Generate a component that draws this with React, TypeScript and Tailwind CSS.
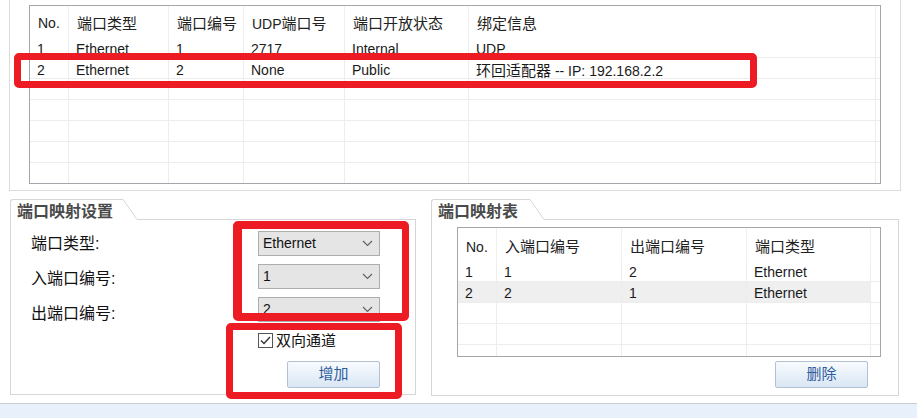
import { Fragment, ReactNode } from 'react';

const TOP_HEAD = ['No.', '端口类型', '端口编号', 'UDP端口号', '端口开放状态', '绑定信息'];
const TOP_ROWS = [
  ['1', 'Ethernet', '1', '2717', 'Internal', 'UDP'],
  ['2', 'Ethernet', '2', 'None', 'Public', '环回适配器 -- IP: 192.168.2.2'],
  ['', '', '', '', '', ''],
  ['', '', '', '', '', ''],
  ['', '', '', '', '', ''],
  ['', '', '', '', '', ''],
  ['', '', '', '', '', ''],
];

const MAP_HEAD = ['No.', '入端口编号', '出端口编号', '端口类型'];
const MAP_ROWS = [
  ['1', '1', '2', 'Ethernet'],
  ['2', '2', '1', 'Ethernet'],
  ['', '', '', ''],
  ['', '', '', ''],
  ['', '', '', ''],
];

// Chinese glyphs render a touch larger than the latin ones in the original
function Mixed({ text }: { text: string }) {
  const parts = text.split(/([\u4e00-\u9fff]+)/);
  return (
    <>
      {parts.map((p, i) =>
        /[\u4e00-\u9fff]/.test(p) ? (
          <span key={i} className="text-[15px]">
            {p}
          </span>
        ) : (
          <Fragment key={i}>{p}</Fragment>
        ),
      )}
    </>
  );
}

function Chevron() {
  return (
    <svg width="11" height="7" viewBox="0 0 11 7" className="shrink-0">
      <polyline points="1,1 5.5,5.5 10,1" fill="none" stroke="#606060" strokeWidth="1.1" />
    </svg>
  );
}

function Combo({ value }: { value: string }) {
  return (
    <div className="flex h-[25px] w-[122px] items-center justify-between border border-[#adadad] bg-[#e5e5e5] pl-[4px] pr-[6px] text-[14px] leading-[23px] text-[#111]">
      <span>{value}</span>
      <Chevron />
    </div>
  );
}

function WinButton({ label }: { label: string }) {
  return (
    <div className="flex h-[27px] w-[93px] items-center justify-center rounded-[2px] border border-[#b3c1d3] bg-gradient-to-b from-[#f8fbfe] to-[#d9e6f4] text-[15px] text-[#2d5c9c]">
      {label}
    </div>
  );
}

function GroupBox({ title, tab, className, children }: { title: string; tab: string; className: string; children: ReactNode }) {
  return (
    <div className={`flex flex-col ${className}`}>
      <div className="flex h-[21px] shrink-0">
        <div className={`${tab} rounded-tl-[3px] border-l border-t border-[#d6d6d6] pl-[6px] pt-[2px] text-[16px] font-bold leading-[20px] text-[#4a4a4a]`}>
          {title}
        </div>
        <svg width="14" height="21" viewBox="0 0 14 21" className="shrink-0">
          <line x1="0" y1="0.5" x2="14" y2="20.5" stroke="#d6d6d6" strokeWidth="1" />
        </svg>
        <div className="flex-1 border-b border-[#d6d6d6]" />
      </div>
      <div className="flex-1 border-x border-b border-[#d6d6d6]">{children}</div>
    </div>
  );
}

export default function App() {
  return (
    <div className="relative h-[418px] w-[917px] overflow-hidden bg-white font-['Liberation_Sans','Noto_Sans_CJK_SC',sans-serif] text-[#1a1a1a]">
      {/* 端口列表 */}
      <div className="ml-[9px] h-[191px] w-[892px] border-x border-b border-[#dcdcdc] pl-[19px] pt-[5px]">
        <div className="h-[179px] w-[852px] overflow-hidden border border-[#a3a6aa] bg-white">
          <div className="grid grid-cols-[39px_100px_75px_101px_124px_407px_1fr] text-[14px]">
            {TOP_HEAD.map((h) => (
              <div key={h} className="h-[31px] border-r border-[#f0f0f0] pl-[8px] pt-[2px] leading-[31px] text-[#222]">
                <Mixed text={h} />
              </div>
            ))}
            <div className="h-[31px]" />
            {TOP_ROWS.map((r, i) => (
              <Fragment key={i}>
                {r.map((c, j) => (
                  <div key={j} className="h-[21px] overflow-hidden whitespace-nowrap border-b border-r border-[#ededed] pl-[7px] pt-[2px] leading-[21px]">
                    <Mixed text={c} />
                  </div>
                ))}
                <div className="h-[21px] border-b border-[#ededed]" />
              </Fragment>
            ))}
          </div>
        </div>
      </div>

      {/* 端口映射 */}
      <div className="flex h-[212px] pl-[10px] pt-[8px]">
        <GroupBox title="端口映射设置" tab="w-[113px]" className="h-[196px] w-[406px]">
          <div className="flex">
            <div className="flex w-[247px] flex-col gap-[15px] pl-[20px] pt-[14px] text-[16px] leading-[20px] text-[#111]">
              <span>端口类型:</span>
              <span>入端口编号:</span>
              <span>出端口编号:</span>
            </div>
            <div className="flex w-[122px] flex-col pt-[11px]">
              <div className="flex flex-col gap-[8px]">
                <Combo value="Ethernet" />
                <Combo value="1" />
                <Combo value="2" />
              </div>
              <div className="mt-[11px] flex h-[15px] items-center">
                <div className="flex h-[15px] w-[15px] items-center justify-center border border-[#555] bg-white">
                  <svg width="11" height="9" viewBox="0 0 11 9">
                    <polyline points="1,4.5 4,7.5 10,1" fill="none" stroke="#333" strokeWidth="1.4" />
                  </svg>
                </div>
                <span className="ml-[3px] text-[15px] leading-[15px] text-[#111]">双向通道</span>
              </div>
              <div className="mt-[13px] flex justify-end">
                <WinButton label="增加" />
              </div>
            </div>
          </div>
        </GroupBox>

        <GroupBox title="端口映射表" tab="w-[99px]" className="ml-[15px] h-[197px] w-[468px]">
          <div className="ml-[25px] mt-[7px] h-[130px] w-[424px] overflow-hidden border border-[#a3a6aa] bg-white">
            <div className="grid grid-cols-[39px_125px_125px_124px_1fr] text-[14px]">
              {MAP_HEAD.map((h) => (
                <div key={h} className="h-[33px] border-r border-[#f0f0f0] pl-[8px] pt-[3px] leading-[32px] text-[#222]">
                  <Mixed text={h} />
                </div>
              ))}
              <div className="h-[33px]" />
              {MAP_ROWS.map((r, i) => (
                <Fragment key={i}>
                  {r.map((c, j) => (
                    <div
                      key={j}
                      className={`h-[21px] whitespace-nowrap border-b border-r border-[#ededed] pl-[7px] pt-[1px] leading-[21px] ${i === 1 ? 'bg-[#efefef]' : ''}`}
                    >
                      {c}
                    </div>
                  ))}
                  <div className="h-[21px] border-b border-[#ededed]" />
                </Fragment>
              ))}
            </div>
          </div>
          <div className="mr-[30px] mt-[4px] flex justify-end">
            <WinButton label="删除" />
          </div>
        </GroupBox>
      </div>

      <div className="h-[15px] border-t border-[#c9ccd0] bg-[#e8f0fc]" />

      {/* 红色标注框 */}
      <div className="absolute left-[14px] top-[53px] h-[35px] w-[743px] rounded-[5px] border-[7px] border-[#ed1c24]" />
      <div className="absolute left-[233px] top-[221px] h-[100px] w-[176px] rounded-[5px] border-y-[8px] border-l-[9px] border-r-[7px] border-[#ed1c24]" />
      <div className="absolute left-[226px] top-[323px] h-[76px] w-[176px] rounded-[5px] border-[7px] border-[#ed1c24]" />
    </div>
  );
}
